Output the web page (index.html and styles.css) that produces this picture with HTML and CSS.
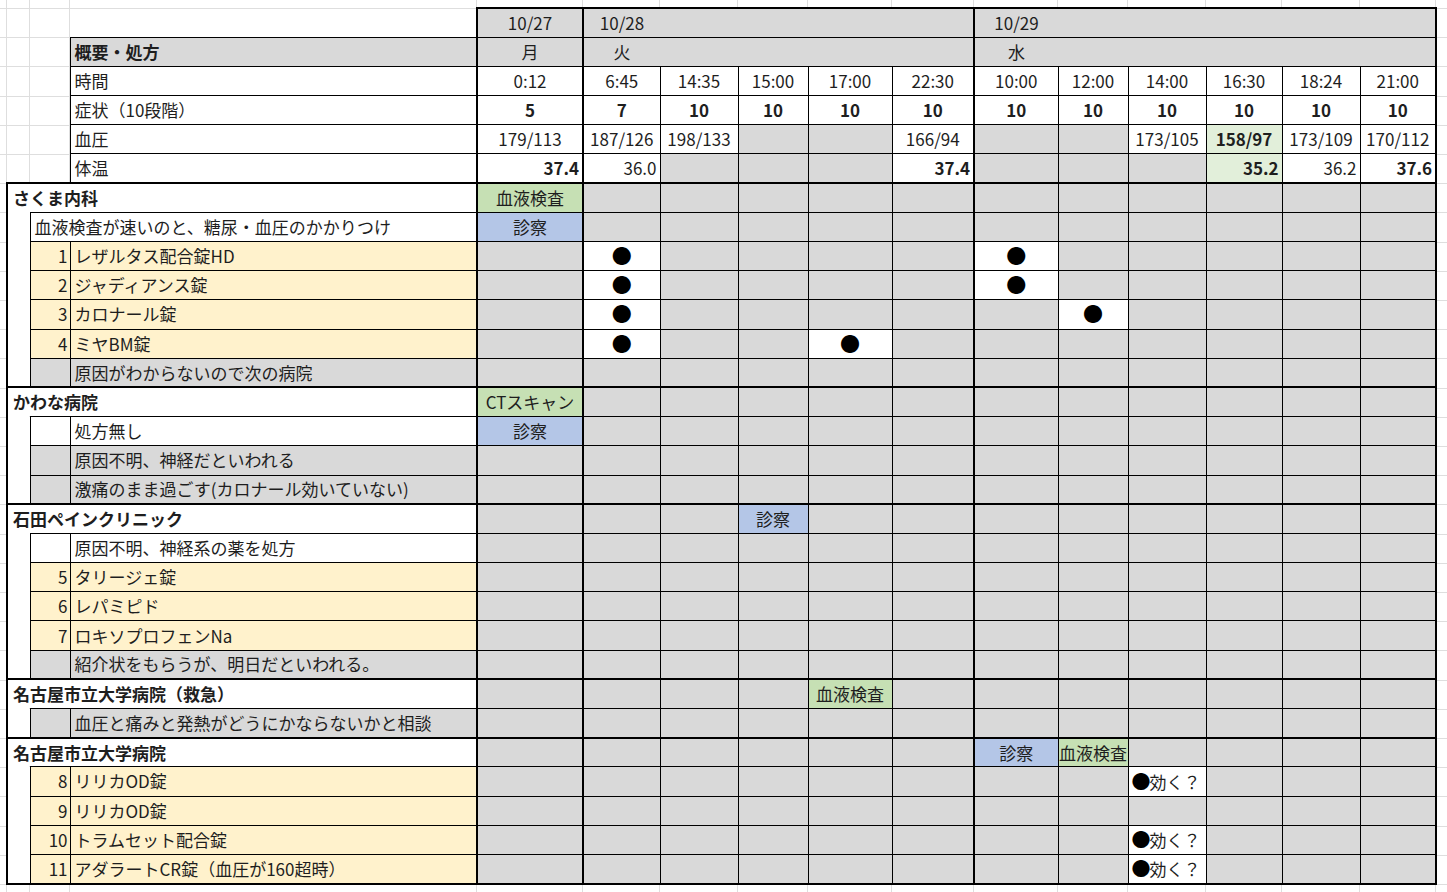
FILE: index.html
```html
<!DOCTYPE html>
<html lang="ja">
<head>
<meta charset="utf-8">
<title>通院記録</title>
<link rel="stylesheet" href="styles.css">
</head>
<body>
<table class="sheet">
  <colgroup>
    <col class="ca"><col class="cb"><col class="cc">
    <col class="w106 gs"><col class="w77 gs"><col class="w78"><col class="w70"><col class="w84"><col class="w82">
    <col class="w84 gs"><col class="w70"><col class="w78"><col class="w76"><col class="w78"><col class="w76 ge">
  </colgroup>
  <tbody>
    <tr>
      <td class="e"></td><td class="e"></td><td class="e"></td>
      <td class="g c n t2">10/27</td>
      <td class="g c n t2">10/28</td><td class="g n t2"></td><td class="g n t2"></td><td class="g n t2"></td><td class="g n t2"></td>
      <td class="g c n t2">10/29</td><td class="g n t2"></td><td class="g n t2"></td><td class="g n t2"></td><td class="g n t2"></td><td class="g n t2"></td>
    </tr>
    <tr>
      <td class="e"></td><td class="e"></td><td class="g b lbl">概要・処方</td>
      <td class="g c n">月</td>
      <td class="g c n">火</td><td class="g n"></td><td class="g n"></td><td class="g n"></td><td class="g n"></td>
      <td class="g c n">水</td><td class="g n"></td><td class="g n"></td><td class="g n"></td><td class="g n"></td><td class="g n"></td>
    </tr>
    <tr>
      <td class="e"></td><td class="e"></td><td class="w lbl">時間</td>
      <td class="w c">0:12</td><td class="w c">6:45</td><td class="w c">14:35</td><td class="w c">15:00</td><td class="w c">17:00</td><td class="w c">22:30</td>
      <td class="w c">10:00</td><td class="w c">12:00</td><td class="w c">14:00</td><td class="w c">16:30</td><td class="w c">18:24</td><td class="w c">21:00</td>
    </tr>
    <tr>
      <td class="e"></td><td class="e"></td><td class="w lbl">症状（10段階）</td>
      <td class="w c b">5</td><td class="w c b">7</td><td class="w c b">10</td><td class="w c b">10</td><td class="w c b">10</td><td class="w c b">10</td>
      <td class="w c b">10</td><td class="w c b">10</td><td class="w c b">10</td><td class="w c b">10</td><td class="w c b">10</td><td class="w c b">10</td>
    </tr>
    <tr>
      <td class="e"></td><td class="e"></td><td class="w lbl">血圧</td>
      <td class="w c">179/113</td><td class="w c">187/126</td><td class="w c">198/133</td><td class="g"></td><td class="g"></td><td class="w c">166/94</td>
      <td class="g"></td><td class="g"></td><td class="w c">173/105</td><td class="lg c b">158/97</td><td class="w c">173/109</td><td class="w c">170/112</td>
    </tr>
    <tr>
      <td class="e"></td><td class="e"></td><td class="w lbl">体温</td>
      <td class="w r b">37.4</td><td class="w r">36.0</td><td class="g"></td><td class="g"></td><td class="g"></td><td class="w r b">37.4</td>
      <td class="g"></td><td class="g"></td><td class="g"></td><td class="lg r b">35.2</td><td class="w r">36.2</td><td class="w r b">37.6</td>
    </tr>

    <!-- さくま内科 -->
    <tr class="sec">
      <td class="sh" colspan="3">さくま内科</td>
      <td class="gr c">血液検査</td><td class="g"></td><td class="g"></td><td class="g"></td><td class="g"></td><td class="g"></td>
      <td class="g"></td><td class="g"></td><td class="g"></td><td class="g"></td><td class="g"></td><td class="g"></td>
    </tr>
    <tr>
      <td class="a"></td><td class="w lbl" colspan="2">血液検査が速いのと、糖尿・血圧のかかりつけ</td>
      <td class="bl c">診察</td><td class="g"></td><td class="g"></td><td class="g"></td><td class="g"></td><td class="g"></td>
      <td class="g"></td><td class="g"></td><td class="g"></td><td class="g"></td><td class="g"></td><td class="g"></td>
    </tr>
    <tr>
      <td class="a"></td><td class="y num">1</td><td class="y lbl">レザルタス配合錠HD</td>
      <td class="g"></td><td class="w c dot">●</td><td class="g"></td><td class="g"></td><td class="g"></td><td class="g"></td>
      <td class="w c dot">●</td><td class="g"></td><td class="g"></td><td class="g"></td><td class="g"></td><td class="g"></td>
    </tr>
    <tr>
      <td class="a"></td><td class="y num">2</td><td class="y lbl">ジャディアンス錠</td>
      <td class="g"></td><td class="w c dot">●</td><td class="g"></td><td class="g"></td><td class="g"></td><td class="g"></td>
      <td class="w c dot">●</td><td class="g"></td><td class="g"></td><td class="g"></td><td class="g"></td><td class="g"></td>
    </tr>
    <tr>
      <td class="a"></td><td class="y num">3</td><td class="y lbl">カロナール錠</td>
      <td class="g"></td><td class="w c dot">●</td><td class="g"></td><td class="g"></td><td class="g"></td><td class="g"></td>
      <td class="g"></td><td class="w c dot">●</td><td class="g"></td><td class="g"></td><td class="g"></td><td class="g"></td>
    </tr>
    <tr>
      <td class="a"></td><td class="y num">4</td><td class="y lbl">ミヤBM錠</td>
      <td class="g"></td><td class="w c dot">●</td><td class="g"></td><td class="g"></td><td class="w c dot">●</td><td class="g"></td>
      <td class="g"></td><td class="g"></td><td class="g"></td><td class="g"></td><td class="g"></td><td class="g"></td>
    </tr>
    <tr>
      <td class="a"></td><td class="g"></td><td class="g lbl">原因がわからないので次の病院</td>
      <td class="g"></td><td class="g"></td><td class="g"></td><td class="g"></td><td class="g"></td><td class="g"></td>
      <td class="g"></td><td class="g"></td><td class="g"></td><td class="g"></td><td class="g"></td><td class="g"></td>
    </tr>

    <!-- かわな病院 -->
    <tr class="sec">
      <td class="sh" colspan="3">かわな病院</td>
      <td class="gr c">CTスキャン</td><td class="g"></td><td class="g"></td><td class="g"></td><td class="g"></td><td class="g"></td>
      <td class="g"></td><td class="g"></td><td class="g"></td><td class="g"></td><td class="g"></td><td class="g"></td>
    </tr>
    <tr>
      <td class="a"></td><td class="w"></td><td class="w lbl">処方無し</td>
      <td class="bl c">診察</td><td class="g"></td><td class="g"></td><td class="g"></td><td class="g"></td><td class="g"></td>
      <td class="g"></td><td class="g"></td><td class="g"></td><td class="g"></td><td class="g"></td><td class="g"></td>
    </tr>
    <tr>
      <td class="a"></td><td class="g"></td><td class="g lbl">原因不明、神経だといわれる</td>
      <td class="g"></td><td class="g"></td><td class="g"></td><td class="g"></td><td class="g"></td><td class="g"></td>
      <td class="g"></td><td class="g"></td><td class="g"></td><td class="g"></td><td class="g"></td><td class="g"></td>
    </tr>
    <tr>
      <td class="a"></td><td class="g"></td><td class="g lbl">激痛のまま過ごす(カロナール効いていない)</td>
      <td class="g"></td><td class="g"></td><td class="g"></td><td class="g"></td><td class="g"></td><td class="g"></td>
      <td class="g"></td><td class="g"></td><td class="g"></td><td class="g"></td><td class="g"></td><td class="g"></td>
    </tr>

    <!-- 石田ペインクリニック -->
    <tr class="sec">
      <td class="sh" colspan="3">石田ペインクリニック</td>
      <td class="g"></td><td class="g"></td><td class="g"></td><td class="bl c">診察</td><td class="g"></td><td class="g"></td>
      <td class="g"></td><td class="g"></td><td class="g"></td><td class="g"></td><td class="g"></td><td class="g"></td>
    </tr>
    <tr>
      <td class="a"></td><td class="w"></td><td class="w lbl">原因不明、神経系の薬を処方</td>
      <td class="g"></td><td class="g"></td><td class="g"></td><td class="g"></td><td class="g"></td><td class="g"></td>
      <td class="g"></td><td class="g"></td><td class="g"></td><td class="g"></td><td class="g"></td><td class="g"></td>
    </tr>
    <tr>
      <td class="a"></td><td class="y num">5</td><td class="y lbl">タリージェ錠</td>
      <td class="g"></td><td class="g"></td><td class="g"></td><td class="g"></td><td class="g"></td><td class="g"></td>
      <td class="g"></td><td class="g"></td><td class="g"></td><td class="g"></td><td class="g"></td><td class="g"></td>
    </tr>
    <tr>
      <td class="a"></td><td class="y num">6</td><td class="y lbl">レパミピド</td>
      <td class="g"></td><td class="g"></td><td class="g"></td><td class="g"></td><td class="g"></td><td class="g"></td>
      <td class="g"></td><td class="g"></td><td class="g"></td><td class="g"></td><td class="g"></td><td class="g"></td>
    </tr>
    <tr>
      <td class="a"></td><td class="y num">7</td><td class="y lbl">ロキソプロフェンNa</td>
      <td class="g"></td><td class="g"></td><td class="g"></td><td class="g"></td><td class="g"></td><td class="g"></td>
      <td class="g"></td><td class="g"></td><td class="g"></td><td class="g"></td><td class="g"></td><td class="g"></td>
    </tr>
    <tr>
      <td class="a"></td><td class="g"></td><td class="g lbl">紹介状をもらうが、明日だといわれる。</td>
      <td class="g"></td><td class="g"></td><td class="g"></td><td class="g"></td><td class="g"></td><td class="g"></td>
      <td class="g"></td><td class="g"></td><td class="g"></td><td class="g"></td><td class="g"></td><td class="g"></td>
    </tr>

    <!-- 名古屋市立大学病院（救急） -->
    <tr class="sec">
      <td class="sh" colspan="3">名古屋市立大学病院（救急）</td>
      <td class="g"></td><td class="g"></td><td class="g"></td><td class="g"></td><td class="gr c">血液検査</td><td class="g"></td>
      <td class="g"></td><td class="g"></td><td class="g"></td><td class="g"></td><td class="g"></td><td class="g"></td>
    </tr>
    <tr>
      <td class="a"></td><td class="g"></td><td class="g lbl">血圧と痛みと発熱がどうにかならないかと相談</td>
      <td class="g"></td><td class="g"></td><td class="g"></td><td class="g"></td><td class="g"></td><td class="g"></td>
      <td class="g"></td><td class="g"></td><td class="g"></td><td class="g"></td><td class="g"></td><td class="g"></td>
    </tr>

    <!-- 名古屋市立大学病院 -->
    <tr class="sec">
      <td class="sh" colspan="3">名古屋市立大学病院</td>
      <td class="g"></td><td class="g"></td><td class="g"></td><td class="g"></td><td class="g"></td><td class="g"></td>
      <td class="bl c">診察</td><td class="gr c">血液検査</td><td class="g"></td><td class="g"></td><td class="g"></td><td class="g"></td>
    </tr>
    <tr>
      <td class="a"></td><td class="y num">8</td><td class="y lbl">リリカOD錠</td>
      <td class="g"></td><td class="g"></td><td class="g"></td><td class="g"></td><td class="g"></td><td class="g"></td>
      <td class="g"></td><td class="g"></td><td class="w lbl q"><span class="bd">●</span>効く？</td><td class="g"></td><td class="g"></td><td class="g"></td>
    </tr>
    <tr>
      <td class="a"></td><td class="y num">9</td><td class="y lbl">リリカOD錠</td>
      <td class="g"></td><td class="g"></td><td class="g"></td><td class="g"></td><td class="g"></td><td class="g"></td>
      <td class="g"></td><td class="g"></td><td class="g"></td><td class="g"></td><td class="g"></td><td class="g"></td>
    </tr>
    <tr>
      <td class="a"></td><td class="y num">10</td><td class="y lbl">トラムセット配合錠</td>
      <td class="g"></td><td class="g"></td><td class="g"></td><td class="g"></td><td class="g"></td><td class="g"></td>
      <td class="g"></td><td class="g"></td><td class="w lbl q"><span class="bd">●</span>効く？</td><td class="g"></td><td class="g"></td><td class="g"></td>
    </tr>
    <tr class="last">
      <td class="a"></td><td class="y num">11</td><td class="y lbl">アダラートCR錠（血圧が160超時）</td>
      <td class="g"></td><td class="g"></td><td class="g"></td><td class="g"></td><td class="g"></td><td class="g"></td>
      <td class="g"></td><td class="g"></td><td class="w lbl q"><span class="bd">●</span>効く？</td><td class="g"></td><td class="g"></td><td class="g"></td>
    </tr>
  </tbody>
</table>
</body>
</html>
```

FILE: styles.css
```css
html, body {
  margin: 0;
  padding: 0;
}

body {
  font-family: "Noto Sans CJK JP", "Noto Sans", sans-serif;
  font-size: 17px;
  color: #1e1e1e;
  background-color: #ffffff;
  min-height: 892px;
  background-image:
    repeating-linear-gradient(to bottom, #dedede -21.2px, #dedede -20.2px, transparent -20.2px, transparent 8px),
    linear-gradient(#dedede, #dedede),
    linear-gradient(#dedede, #dedede),
    linear-gradient(#dedede, #dedede),
    linear-gradient(#dedede, #dedede),
    linear-gradient(#dedede, #dedede),
    linear-gradient(#dedede, #dedede),
    linear-gradient(#dedede, #dedede),
    linear-gradient(#dedede, #dedede),
    linear-gradient(#dedede, #dedede),
    linear-gradient(#dedede, #dedede),
    linear-gradient(#dedede, #dedede),
    linear-gradient(#dedede, #dedede),
    linear-gradient(#dedede, #dedede),
    linear-gradient(#dedede, #dedede),
    linear-gradient(#dedede, #dedede),
    linear-gradient(#dedede, #dedede);
  background-repeat:
    no-repeat, no-repeat, no-repeat, no-repeat, no-repeat, no-repeat, no-repeat, no-repeat, no-repeat,
    no-repeat, no-repeat, no-repeat, no-repeat, no-repeat, no-repeat, no-repeat, no-repeat;
  background-size:
    100% 892px,
    1px 892px, 1px 892px, 1px 892px, 1px 892px, 1px 892px, 1px 892px, 1px 892px, 1px 892px,
    1px 892px, 1px 892px, 1px 892px, 1px 892px, 1px 892px, 1px 892px, 1px 892px, 1px 892px;
  background-position:
    0 0,
    6px 0, 29px 0, 69px 0, 476px 0, 582px 0, 659px 0, 737px 0, 807px 0,
    891px 0, 973px 0, 1057px 0, 1127px 0, 1205px 0, 1281px 0, 1359px 0, 1435px 0;
}

.sheet {
  border-collapse: collapse;
  table-layout: fixed;
  width: 1429px;
  margin: 7px 0 0 6px;
}

.sheet tr {
  height: 29.2px;
}

.sheet td {
  border: 1px solid #000;
  padding: 0;
  white-space: nowrap;
  overflow: hidden;
  vertical-align: middle;
  line-height: 20px;
}

/* columns */
.ca { width: 23px; }
.cb { width: 40px; }
.cc { width: 407px; }
.w106 { width: 106px; }
.w77 { width: 77px; }
.w78 { width: 78px; }
.w70 { width: 70px; }
.w84 { width: 84px; }
.w82 { width: 82px; }
.w76 { width: 76px; }
.gs { border-left: 2px solid #000; }
.ge { border-right: 2px solid #000; }

/* rows */
.sheet tr.sec { border-top: 2px solid #000; }
.sheet tr.last { border-bottom: 2px solid #000; }

/* cell kinds */
.sheet td.e {
  border: none;
  background: transparent;
}
.sheet td.n {
  border-left: none;
  border-right: none;
}
.sheet td.t2 { border-top: 2px solid #000; }

.sheet td.sh {
  border-left: 2px solid #000;
  border-bottom: none;
  background: #fff;
  font-weight: bold;
  padding-left: 5px;
}
.sheet td.a {
  border-top: none;
  border-bottom: none;
  border-left: 2px solid #000;
  background: #fff;
}

.g { background: #d9d9d9; }
.w { background: #ffffff; }
.y { background: #fff2cc; }
.gr { background: #c6e0b4; }
.bl { background: #b4c6e7; }
.lg { background: #e2efda; }

.c { text-align: center; }
.r { text-align: right; }
.sheet td.r { padding-right: 3px; }
.b { font-weight: bold; }
.sheet td.lbl { padding-left: 4px; }
.sheet td.q { padding-left: 3px; }
.sheet td.num {
  text-align: right;
  padding-right: 2px;
}
.dot {
  font-size: 20px;
  color: #000;
}
.bd {
  font-size: 19px;
  color: #000;
  margin-right: -1px;
}
```
